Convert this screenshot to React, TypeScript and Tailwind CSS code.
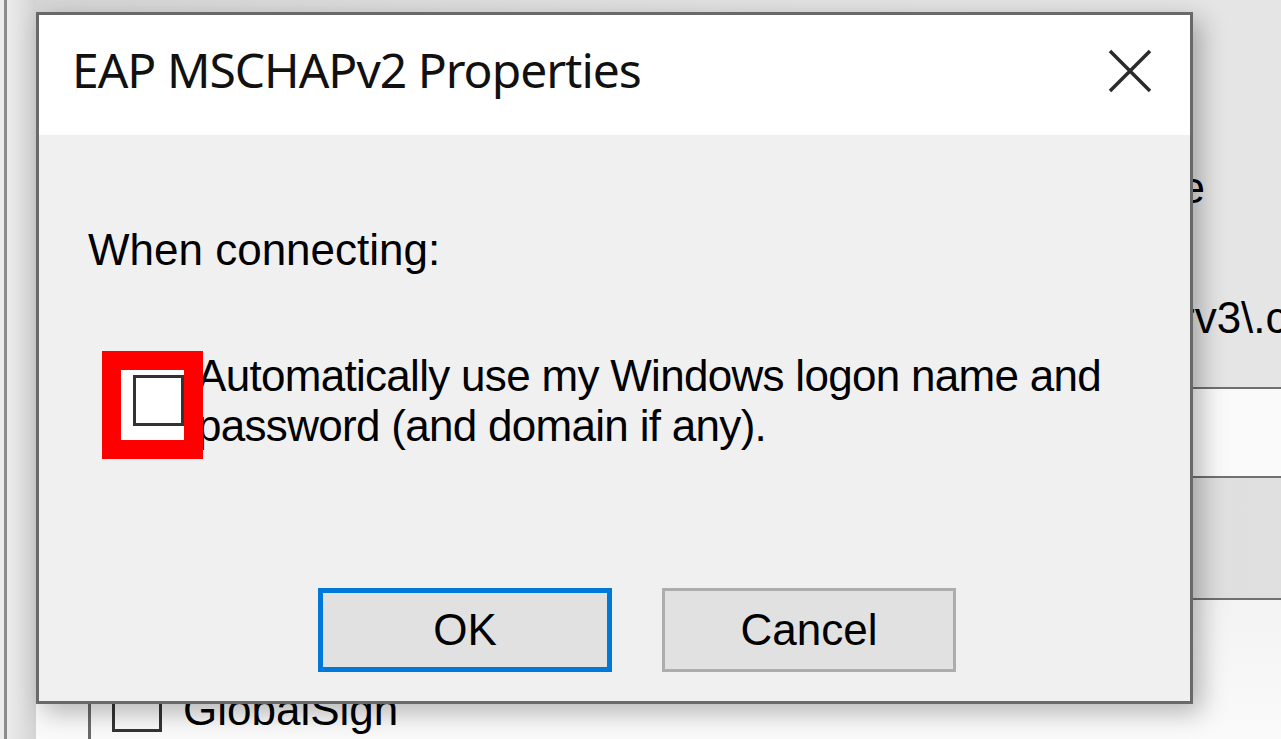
function CloseIcon() {
  return (
    <svg width="44" height="44" viewBox="0 0 44 44" className="text-[#2b2b2b]">
      <path d="M2 2 L42 42 M42 2 L2 42" stroke="currentColor" strokeWidth="3.5" />
    </svg>
  );
}

function BackWindow() {
  return (
    <div className="flex h-full w-full">
      <div className="flex h-full w-[36px] shrink-0 bg-[#ececec]">
        <div className="ml-[4px] h-full w-[3px] bg-[#8c8c8c]" />
        <div className="h-full flex-1 bg-gradient-to-r from-[#ececec] to-[#d4d4d4]" />
      </div>
      <div className="flex flex-1 flex-col text-[44px] leading-[50px] text-black">
        <div className="h-[387px] bg-gradient-to-r from-[#d6d6d6] via-[#e2e2e2] to-[#e6e6e6]">
          <p className="mt-[163px] w-[1169px] whitespace-nowrap text-right">
            Verify the server's identity by validating the certificate
          </p>
          <p className="ml-[1122px] mt-[80px] whitespace-nowrap">srv3\.com):</p>
        </div>
        <div className="h-[2px] bg-[#707070]" />
        <div className="h-[87px] bg-gradient-to-r from-[#e4e4e4] via-[#f6f6f6] to-[#fbfbfb]" />
        <div className="h-[2px] bg-[#707070]" />
        <div className="h-[120px] bg-gradient-to-r from-[#d4d4d4] via-[#dedede] to-[#e0e0e0]" />
        <div className="h-[2px] bg-[#707070]" />
        <div className="flex flex-1 bg-gradient-to-b from-[#f3f3f3] to-[#fafafa]">
          <div className="ml-[52px] h-full w-[3px] bg-[#6a6a6a]" />
          <div className="ml-[21px] flex items-start pt-[82px]">
            <div className="h-[50px] w-[50px] border-[3px] border-[#333]" />
            <span className="ml-[21px] mt-[3px] whitespace-nowrap">GlobalSign</span>
          </div>
        </div>
      </div>
    </div>
  );
}

function Dialog() {
  return (
    <div className="absolute left-[36px] top-[12px] flex h-[692px] w-[1157px] flex-col border-[3px] border-[#696969] bg-[#f0f0f0] shadow-[8px_8px_24px_rgba(0,0,0,0.28)]">
      <div className="flex h-[120px] shrink-0 items-center justify-between bg-white pb-[10px] pl-[33px] pr-[38px]">
        <span className="font-['Noto_Sans',sans-serif] text-[48px] leading-[60px] tracking-[-1px] text-[#111]">
          EAP MSCHAPv2 Properties
        </span>
        <div className="mt-[2px]">
          <CloseIcon />
        </div>
      </div>
      <div className="flex flex-1 flex-col pl-[49px] pt-[90px] text-[44px] leading-[50px] text-black">
        <p>When connecting:</p>
        <div className="mt-[76px] flex items-start pl-[14px]">
          <div className="relative z-10 flex h-[108px] w-[101px] shrink-0 items-start border-[19px] border-[#ff0000] bg-white pl-[12px] pt-[5px]">
            <div className="h-[51px] w-[51px] border-[3px] border-[#333] bg-white" />
          </div>
          <p className="-ml-[6px] whitespace-nowrap tracking-[-0.7px]">
            Automatically use my Windows logon name and
            <br />
            password (and domain if any).
          </p>
        </div>
        <div className="mt-[129px] flex gap-[50px] pl-[230px]">
          <button className="flex h-[84px] w-[294px] items-center justify-center border-[5px] border-[#0078d7] bg-[#e1e1e1] text-black">
            OK
          </button>
          <button className="flex h-[84px] w-[294px] items-center justify-center border-[3px] border-[#adadad] bg-[#e1e1e1] text-black">
            Cancel
          </button>
        </div>
      </div>
    </div>
  );
}

export default function App() {
  return (
    <div className="relative h-[739px] w-[1281px] overflow-hidden bg-[#e8e8e8] font-['Liberation_Sans',Arial,sans-serif]">
      <BackWindow />
      <Dialog />
    </div>
  );
}
